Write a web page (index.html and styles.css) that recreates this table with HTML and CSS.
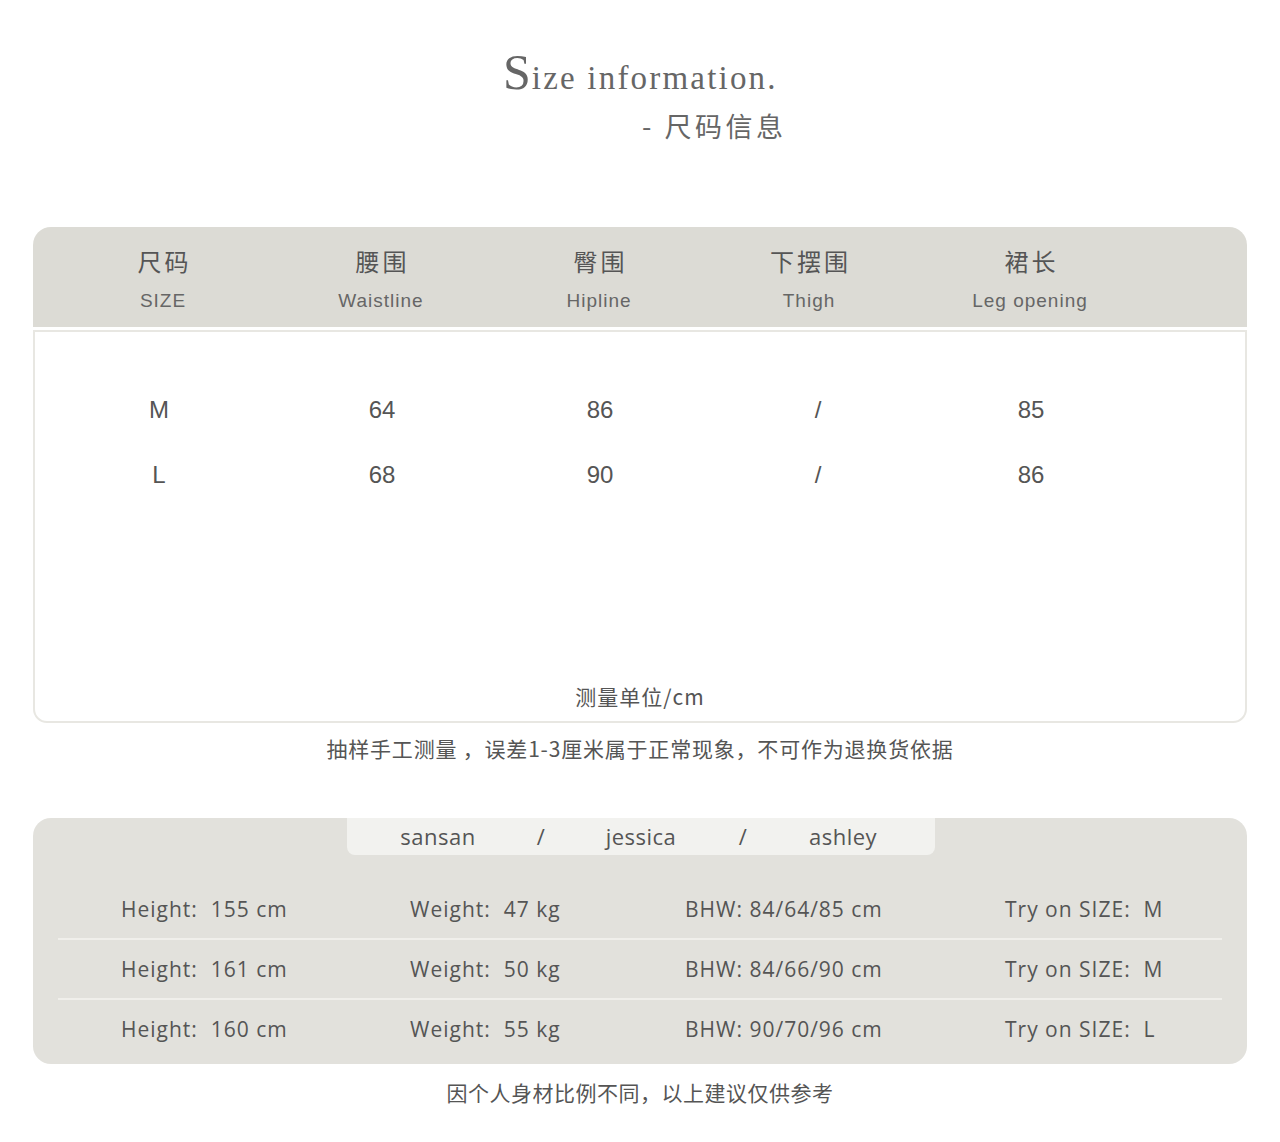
FILE: index.html
```html
<!DOCTYPE html>
<html lang="zh">
<head>
<meta charset="utf-8">
<link rel="stylesheet" href="styles.css">
</head>
<body>
<div class="page">
  <header class="title">
    <div class="title-en"><span class="cap">S</span>ize information.</div>
    <div class="title-cn">- 尺码信息</div>
  </header>

  <section class="size-card">
    <div class="size-head">
      <div class="col"><div class="cn">尺码</div><div class="en">SIZE</div></div>
      <div class="col"><div class="cn">腰围</div><div class="en">Waistline</div></div>
      <div class="col"><div class="cn">臀围</div><div class="en">Hipline</div></div>
      <div class="col"><div class="cn">下摆围</div><div class="en">Thigh</div></div>
      <div class="col"><div class="cn">裙长</div><div class="en">Leg opening</div></div>
    </div>
    <div class="size-body">
      <div class="rows">
        <div class="row">
          <div class="cell">M</div><div class="cell">64</div><div class="cell">86</div><div class="cell">/</div><div class="cell">85</div>
        </div>
        <div class="row">
          <div class="cell">L</div><div class="cell">68</div><div class="cell">90</div><div class="cell">/</div><div class="cell">86</div>
        </div>
      </div>
      <div class="unit">测量单位/cm</div>
    </div>
  </section>
  <p class="note1">抽样手工测量 ，误差1-3厘米属于正常现象，不可作为退换货依据</p>

  <section class="model-card">
    <div class="tabs">
      <span class="name n1">sansan</span><span class="name s1">/</span><span class="name n2">jessica</span><span class="name s2">/</span><span class="name n3">ashley</span>
    </div>
    <div class="mrows">
      <div class="mrow"><span class="m1">Height:&nbsp; 155 cm</span><span class="m2">Weight:&nbsp; 47 kg</span><span class="m3">BHW: 84/64/85 cm</span><span class="m4">Try on SIZE:&nbsp; M</span></div>
      <div class="mrow"><span class="m1">Height:&nbsp; 161 cm</span><span class="m2">Weight:&nbsp; 50 kg</span><span class="m3">BHW: 84/66/90 cm</span><span class="m4">Try on SIZE:&nbsp; M</span></div>
      <div class="mrow last"><span class="m1">Height:&nbsp; 160 cm</span><span class="m2">Weight:&nbsp; 55 kg</span><span class="m3">BHW: 90/70/96 cm</span><span class="m4">Try on SIZE:&nbsp; L</span></div>
    </div>
  </section>
  <p class="note2">因个人身材比例不同，以上建议仅供参考</p>
</div>
</body>
</html>
```
FILE: styles.css
```css
html, body {
  margin: 0;
  padding: 0;
  background: #ffffff;
}
body {
  font-family: "Open Sans", "Noto Sans CJK SC", sans-serif;
  color: #555555;
}
.page {
  width: 1280px;
  height: 1142px;
  padding: 0 33px;
  box-sizing: border-box;
  overflow: hidden;
}
.title {
  padding-top: 46px;
  height: 227px;
  box-sizing: border-box;
}
.title-en {
  font-family: "Liberation Serif", "DejaVu Serif", serif;
  font-size: 33px;
  letter-spacing: 2.2px;
  color: #666666;
  margin-left: 470px;
  line-height: 52px;
}
.title-en .cap {
  font-size: 50px;
  letter-spacing: 1px;
}
.title-cn {
  font-family: "Noto Sans CJK SC", sans-serif;
  font-size: 27px;
  color: #666666;
  margin-left: 609px;
  line-height: 36px;
  margin-top: 4px;
  letter-spacing: 3.5px;
}

.size-card {
  width: 1214px;
}
.size-head {
  background: #dcdbd5;
  border-radius: 18px 18px 0 0;
  height: 100px;
  display: grid;
  grid-template-columns: 260px 176px 260px 160px 282px;
  padding-top: 16px;
  box-sizing: border-box;
}
.col {
  text-align: center;
}
.cn {
  font-family: "Noto Sans CJK SC", sans-serif;
  font-size: 24px;
  color: #555;
  line-height: 36px;
  letter-spacing: 3px;
  padding-left: 3px;
}
.en {
  font-family: "Liberation Sans", Arial, sans-serif;
  font-size: 19px;
  color: #666;
  line-height: 34px;
  letter-spacing: 1px;
  margin-top: 5px;
}
.size-body {
  margin-top: 3px;
  border: 2px solid #e8e7e2;
  border-radius: 0 0 14px 14px;
  height: 393px;
  box-sizing: border-box;
  display: flex;
  flex-direction: column;
  justify-content: space-between;
  padding: 62px 0 10px;
}
.rows {
  display: flex;
  flex-direction: column;
  gap: 33px;
}
.row {
  display: grid;
  grid-template-columns: 248px 198px 238px 198px 228px;
  font-family: "Liberation Sans", Arial, sans-serif;
  font-size: 24px;
  color: #555;
  line-height: 32px;
}
.cell {
  text-align: center;
}
.unit {
  text-align: center;
  font-family: "Noto Sans CJK SC", sans-serif;
  font-size: 21px;
  letter-spacing: 1px;
  color: #555;
  line-height: 30px;
}
.note1 {
  margin: 10px 0 0;
  text-align: center;
  font-family: "Noto Sans CJK SC", sans-serif;
  font-size: 21px;
  letter-spacing: 0.8px;
  color: #555;
  line-height: 30px;
}

.model-card {
  margin-top: 55px;
  width: 1214px;
  height: 246px;
  background: #e2e1dc;
  border-radius: 18px;
  box-sizing: border-box;
  padding: 0 25px;
}
.tabs {
  margin-left: 289px;
  width: 588px;
  height: 37px;
  background: #f2f2ef;
  border-radius: 0 0 8px 8px;
  font-size: 22px;
  color: #555;
  line-height: 37px;
  position: relative;
}
.name {
  position: absolute;
  transform: translateX(-50%);
  top: 0;
  letter-spacing: 0.5px;
}
.n1 { left: 91px; }
.s1 { left: 194px; }
.n2 { left: 294px; }
.s2 { left: 396px; }
.n3 { left: 496px; }
.mrows {
  margin-top: 25px;
}
.mrow {
  display: flex;
  height: 58px;
  align-items: center;
  border-bottom: 2px solid #f0efeb;
  font-size: 21px;
  color: #555;
  letter-spacing: 1px;
}
.mrow.last {
  border-bottom: none;
}
.mrow span {
  display: block;
}
.m1 { padding-left: 63px; box-sizing: border-box; width: 352px; }
.m2 { width: 275px; }
.m3 { width: 320px; }
.note2 {
  margin: 13px 0 0;
  text-align: center;
  font-family: "Noto Sans CJK SC", sans-serif;
  font-size: 21px;
  letter-spacing: 0.5px;
  color: #555;
  line-height: 30px;
}
```
